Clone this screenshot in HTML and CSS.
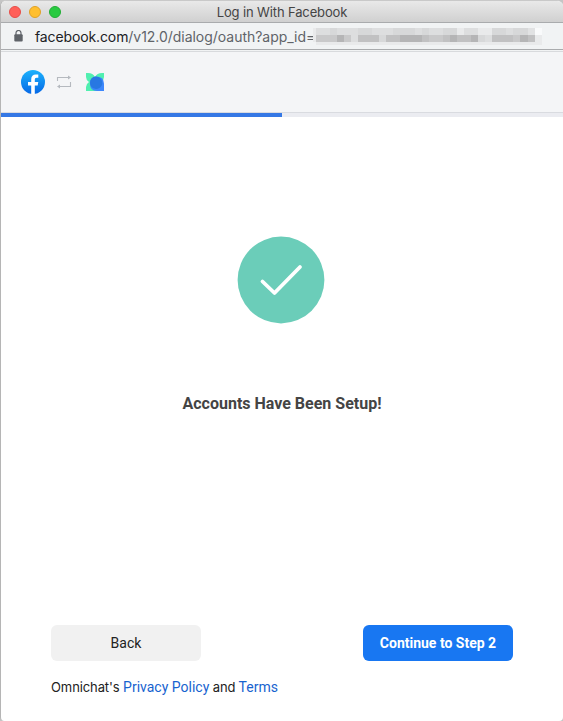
FILE: index.html
```
<!DOCTYPE html>
<html lang="en">
<head>
<meta charset="utf-8">
<title>Log in With Facebook</title>
<link rel="stylesheet" href="styles.css">
</head>
<body>
<div class="window">
  <div class="titlebar">
    <div class="lights"><i class="light close"></i><i class="light minimize"></i><i class="light zoom"></i></div>
    <span class="title">Log in With Facebook</span>
  </div>
  <div class="address">
    <svg class="lock" width="9" height="12" viewBox="0 0 9 12"><path d="M2 5V3a2.500 2.500 0 0 1 5 0v2" fill="none" stroke="#5f6368" stroke-width="1.200"/><rect x=".3" y="4.300" width="8.400" height="7.200" rx="1" fill="#5f6368"/></svg>
    <span class="url"><span class="domain">facebook.com</span>/v12.0/dialog/oauth?app_id=</span>
    <svg class="mosaic" width="229" height="18" viewBox="0 0 229 18" shape-rendering="crispEdges">
      <path fill="#e9eaeb" d="M0 0h3v14H0zM3 14h226v3H3zM144 0h7v7h-7zM165 0h14v7h-14zM222 7h7v7h-7z"/>
      <path fill="#dddedf" d="M3 0h141v7H3zM151 0h14v7h-14zM179 0h36v7h-36zM38 7h8v7h-8zM172 7h7v7h-7z"/>
      <path fill="#f9fafb" d="M222 0h7v7h-7z"/>
      <path fill="#d7d8d9" d="M17 0h7v7h-7zM45 0h14v7H45zM80 0h22v7H80zM109 0h7v7h-7zM130 0h14v7h-14zM179 0h14v7h-14zM200 0h15v7h-15zM66 7h8v7h-8zM165 7h7v7h-7z"/>
      <path fill="#e1e2e3" d="M215 0h7v7h-7z"/>
      <path fill="#c9c9ca" d="M3 7h21v7H3zM31 7h7v7h-7zM116 7h14v7h-14zM200 7h7v7h-7z"/>
      <path fill="#c1c1c2" d="M45 7h21v7H45zM73 7h14v7H73zM109 7h7v7h-7zM130 7h7v7h-7zM144 7h21v7h-21zM179 7h21v7h-21zM215 7h7v7h-7z"/>
      <path fill="#b5b5b6" d="M24 7h7v7h-7zM87 7h22v7H87zM137 7h7v7h-7zM158 7h7v7h-7zM207 7h8v7h-8z"/>
    </svg>
  </div>
  <header class="header">
    <svg width="24" height="24" viewBox="0 0 24 24"><defs><linearGradient id="fb" x2="0" y2="1"><stop stop-color="#1cb2fc"/><stop offset="1" stop-color="#0668e6"/></linearGradient></defs><circle cx="12" cy="12" r="12" fill="url(#fb)"/><path fill="#fff" d="M10.200 24v-8.400H7V12h3.200V9.200C10.200 6.100 12 4.400 14.800 4.400c1.300 0 2.500.2 2.500.2v3.200h-1.600c-1.500 0-1.900.9-1.900 1.900V12h3.500l-.6 3.600h-2.900V24z"/></svg>
    <svg class="swap" width="16" height="14" viewBox="0 0 16 14"><path d="M1.500 6V2.500H14M14.500 7v4.500H2" fill="none" stroke="#b5b9bf" stroke-width="1.100"/><path d="M12 .5l3 2-3 2zM4 9.500l-3 2 3 2z" fill="#b5b9bf"/></svg>
    <svg class="brand" width="18" height="18" viewBox="0 0 18 18"><path fill="#50efb0" d="M0 0h2q5 0 7 4 2-4 7-4h2v4q0 3-3 5v9H0v-4q0-3 3-5Q0 7 0 4z"/><path fill="#3d87fc" d="M10 3.500q8 0 8 7V18h-7q-7 0-7-7 0-7.500 6-7.500"/><path fill="#2878e2" d="M10 3.500a6.500 6.500 0 0 1 6 8.500q-2 4-6 4-6-1-6-6 0-6 6-6.500"/></svg>
  </header>
  <div class="progress"><div class="bar"></div></div>
  <main class="content">
    <svg class="success" width="88" height="88" viewBox="0 0 88 88"><circle cx="44" cy="44" r="43.400" fill="#6bcdb9"/><path d="M25.500 45.500L37.500 57 63 31" fill="none" stroke="#fff" stroke-width="3.800" stroke-linecap="round" stroke-linejoin="round"/></svg>
    <h1 class="heading">Accounts Have Been Setup!</h1>
  </main>
  <footer class="footer">
    <div class="actions"><button class="button">Back</button><button class="button primary">Continue to Step 2</button></div>
    <p class="legal"><span class="plain">Omnichat's</span> <a>Privacy Policy</a> <span class="plain">and</span> <a>Terms</a></p>
  </footer>
</div>
</body>
</html>
```
FILE: styles.css
```
* { box-sizing: border-box; }
body { margin: 0; background: #c5c5c5; font-family: Roboto, sans-serif; }
.window { height: 721px; display: flex; flex-direction: column; background: #fff; border-left: 1px solid #b5b5b5; border-top: 1px solid #c9c9c9; border-radius: 6px 6px 4px 4px; overflow: hidden; }
.titlebar { height: 22px; flex: none; display: grid; grid-template-columns: 1fr auto 1fr; align-items: center; background: linear-gradient(#e9e9e9, #d0d0d0); border-bottom: 1px solid #a9abad; }
.lights { display: flex; gap: 8px; padding-left: 8px; }
.light { width: 12px; height: 12px; border-radius: 50%; border: 1px solid; }
.close { background: #ff6059; border-color: #e64d48; }
.minimize { background: #ffbf2f; border-color: #dfa127; }
.zoom { background: #29ca41; border-color: #22ad35; }
.title { font: 13px/20px Inter, sans-serif; letter-spacing: -.13px; color: #444; white-space: nowrap; padding-top: 1px; }
.address { height: 27px; flex: none; display: flex; align-items: center; background: #f1f3f4; border-bottom: 1px solid #a9abad; }
.lock { margin-left: 13px; }
.url { width: 280px; flex: none; margin-left: 12px; padding-top: 2px; font: 14px/24px Inter, sans-serif; letter-spacing: -.03px; color: #606368; white-space: nowrap; }
.domain { color: #202124; letter-spacing: -.12px; }
.mosaic { flex: none; margin: 2px 0 0 -2px; }
.header { height: 63px; flex: none; display: flex; align-items: center; padding: 2px 0 0 20px; background: #f4f5f7; border-bottom: 1px solid #d9dbe0; box-shadow: inset 0 1px #f1f3f4, inset 0 2px #d8dadd; }
.swap { margin-left: 11px; }
.brand { margin-left: 14px; }
.progress { height: 4px; flex: none; background: #ebecf1; }
.bar { width: 50%; height: 4px; background: #3578e5; }
.content { flex: 1; display: flex; flex-direction: column; align-items: center; padding-top: 119px; }
.success { margin-right: 2px; }
.heading { margin: 68px 0 0; font-size: 16px; line-height: 24px; font-weight: 700; color: #444; }
.footer { height: 96px; flex: none; padding: 0 50px; }
.actions { display: flex; justify-content: space-between; }
.button { width: 150px; height: 36px; padding: 0; border: 0; border-radius: 6px; background: #f1f1f1; font: 14px Roboto, sans-serif; color: #222; }
.primary { background: #1877f2; color: #fff; font-weight: 700; }
.legal { margin: 16px 0 0; font-size: 14px; line-height: 20px; color: #222; white-space: nowrap; }
.plain { font-family: Inter, sans-serif; font-size: 13px; letter-spacing: -.1px; }
.legal a { color: #1763cf; }
```
